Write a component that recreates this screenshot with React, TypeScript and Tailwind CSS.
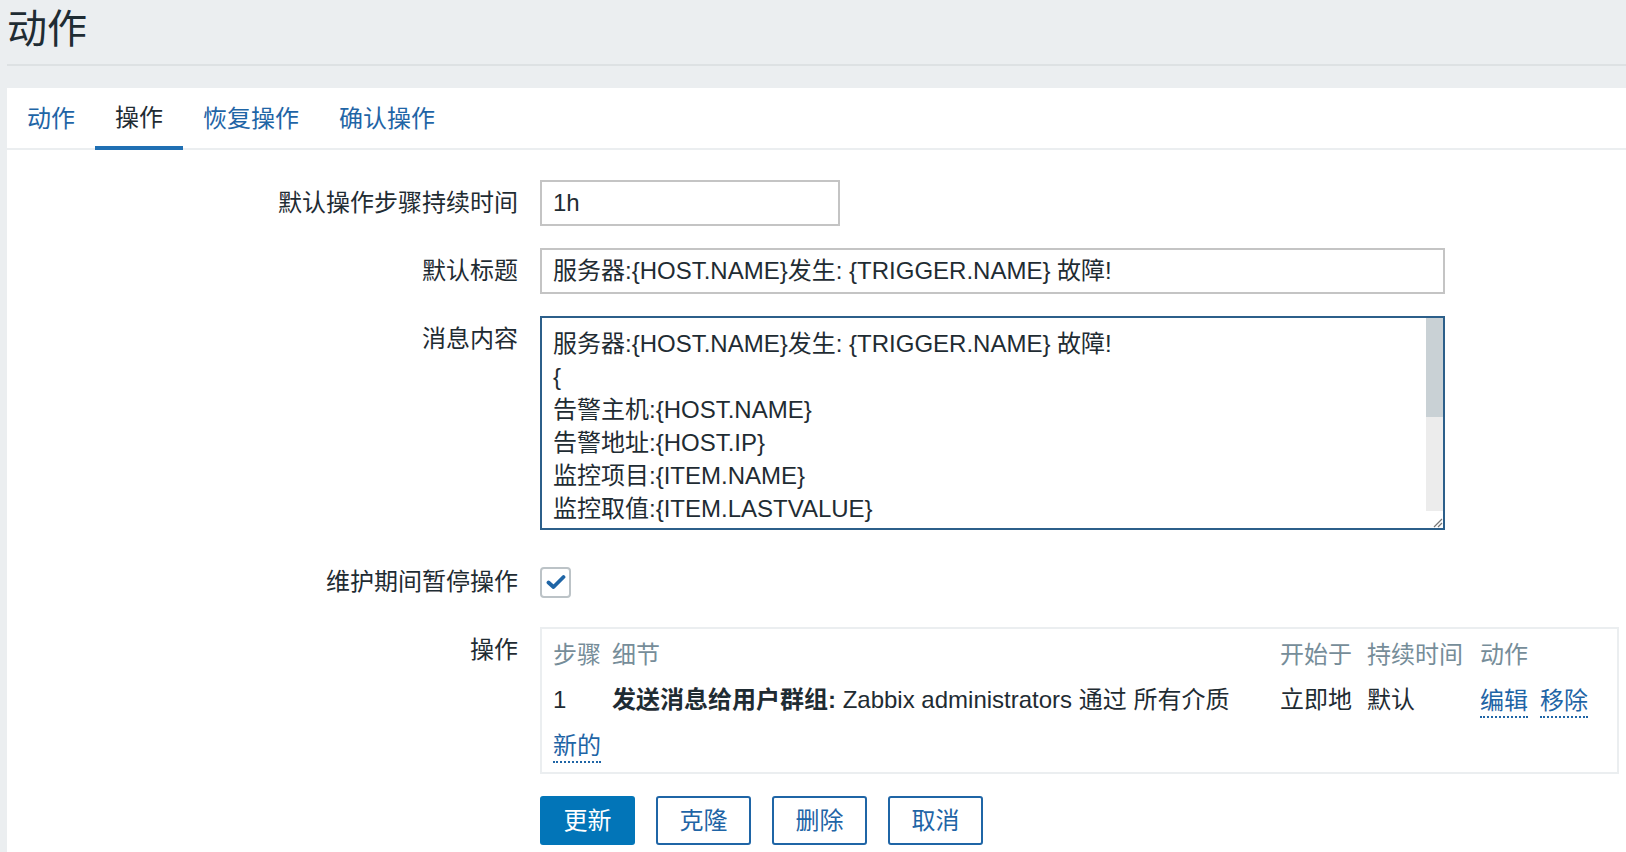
import React from "react";

const tabs = ["动作", "操作", "恢复操作", "确认操作"];

const messageLines = [
  "服务器:{HOST.NAME}发生: {TRIGGER.NAME} 故障!",
  "{",
  "告警主机:{HOST.NAME}",
  "告警地址:{HOST.IP}",
  "监控项目:{ITEM.NAME}",
  "监控取值:{ITEM.LASTVALUE}",
];

function Row({
  label,
  children,
}: {
  label: string;
  children: React.ReactNode;
}) {
  return (
    <div className="flex items-start">
      <div className="w-[511px] h-[46px] flex items-center justify-end shrink-0">
        {label}
      </div>
      <div className="ml-[22px]">{children}</div>
    </div>
  );
}

function DottedLink({ children }: { children: React.ReactNode }) {
  return (
    <span className="inline-block leading-[24px] pb-[3px] text-[#1f65a6] border-b-2 border-dotted border-[#1f65a6]">
      {children}
    </span>
  );
}

export default function App() {
  return (
    <div className="min-h-[852px] bg-[#ebeef0] pl-[7px] text-[#1f2c33] font-['Liberation_Sans','Noto_Sans_CJK_SC',sans-serif] text-[24px]">
      <div className="h-[66px] pt-[9px] border-b-2 border-[#dde1e3]">
        <h1 className="text-[40px] leading-none">动作</h1>
      </div>

      <div className="mt-[22px] bg-white min-h-[764px]">
        {/* tabs */}
        <div className="flex h-[62px] border-b-2 border-[#ebeef0]">
          {tabs.map((t, i) => (
            <div
              key={t}
              className={
                i === 1
                  ? "px-[20px] flex items-center border-b-4 border-[#1f6fb3] -mb-[2px] pt-[2px] text-[#1f2c33]"
                  : "px-[20px] flex items-center text-[#1f65a6] pt-[2px]"
              }
            >
              {t}
            </div>
          ))}
        </div>

        {/* form */}
        <div className="pt-[30px] flex flex-col gap-[22px]">
          <Row label="默认操作步骤持续时间">
            <div className="w-[300px] h-[46px] border-2 border-[#c4c4c4] px-[11px] flex items-center">
              1h
            </div>
          </Row>

          <Row label="默认标题">
            <div className="w-[905px] h-[46px] border-2 border-[#c4c4c4] px-[11px] flex items-center">
              服务器:{"{HOST.NAME}"}发生: {"{TRIGGER.NAME}"} 故障!
            </div>
          </Row>

          <Row label="消息内容">
            <div className="w-[905px] h-[214px] border-2 border-[#2c5f8a] flex overflow-hidden">
              <div className="flex-1 pl-[11px] pt-[9px] leading-[33px] whitespace-pre">
                {messageLines.map((l, i) => (
                  <div key={i}>{l}</div>
                ))}
              </div>
              <div className="w-[17px] flex flex-col bg-[#ececec]">
                <div className="h-[99px] bg-[#c9d1d5]" />
                <div className="flex-1" />
                <div className="h-[17px] bg-white flex items-end justify-end">
                  <svg width="12" height="12" viewBox="0 0 12 12">
                    <path d="M11 3 L3 11 M11 7 L7 11" stroke="#777" strokeWidth="1.2" />
                  </svg>
                </div>
              </div>
            </div>
          </Row>

          <div className="mt-[7px]">
            <Row label="维护期间暂停操作">
              <div className="h-[46px] flex items-center">
                <div className="w-[31px] h-[31px] border-2 border-[#bcc3c7] rounded-[4px] flex items-center justify-center">
                  <svg width="20" height="16" viewBox="0 0 20 16">
                    <path
                      d="M2.5 8.5 L7.5 13 L17.5 3"
                      fill="none"
                      stroke="#1f65a6"
                      strokeWidth="3.8"
                      strokeLinecap="round"
                      strokeLinejoin="round"
                    />
                  </svg>
                </div>
              </div>
            </Row>
          </div>

          <Row label="操作">
            <div className="w-[1079px] h-[147px] border-2 border-[#ebeef0] pl-[11px] pt-[3px]">
              <div className="grid grid-cols-[59px_668px_87px_113px_1fr]">
                <div className="h-[45px] flex items-center text-[#768d99]">步骤</div>
                <div className="h-[45px] flex items-center text-[#768d99]">细节</div>
                <div className="h-[45px] flex items-center text-[#768d99]">开始于</div>
                <div className="h-[45px] flex items-center text-[#768d99]">持续时间</div>
                <div className="h-[45px] flex items-center text-[#768d99]">动作</div>

                <div className="h-[45px] flex items-center">1</div>
                <div className="h-[45px] flex items-center whitespace-nowrap">
                  <b className="font-bold">发送消息给用户群组:</b>
                  &nbsp;Zabbix administrators 通过 所有介质
                </div>
                <div className="h-[45px] flex items-center">立即地</div>
                <div className="h-[45px] flex items-center">默认</div>
                <div className="h-[45px] flex items-center gap-[12px] pt-[7px]">
                  <DottedLink>编辑</DottedLink>
                  <DottedLink>移除</DottedLink>
                </div>
              </div>
              <div className="h-[45px] flex items-center pt-[7px]">
                <DottedLink>新的</DottedLink>
              </div>
            </div>
          </Row>

          <div className="flex">
            <div className="w-[533px] shrink-0" />
            <div className="flex gap-[21px]">
              <button className="w-[95px] h-[49px] rounded-[3px] bg-[#0275b8] text-white">
                更新
              </button>
              {["克隆", "删除", "取消"].map((b) => (
                <button
                  key={b}
                  className="w-[95px] h-[49px] rounded-[3px] border-2 border-[#1f65a6] bg-white text-[#1f65a6]"
                >
                  {b}
                </button>
              ))}
            </div>
          </div>
        </div>
      </div>
    </div>
  );
}
